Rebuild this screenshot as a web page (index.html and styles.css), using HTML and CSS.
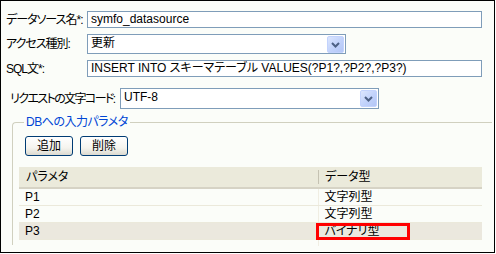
FILE: index.html
```html
<!DOCTYPE html>
<html>
<head>
    <title>データソース設定</title>
    <meta charset="utf-8">
    <link rel="stylesheet" href="styles.css">
</head>
<body>
    <div class="frame">
        <div class="form-row row-first">
            <label class="field-label">データソース名*:</label>
            <div class="text-box wide">symfo_datasource</div>
        </div>
        <div class="form-row row-access">
            <label class="field-label">アクセス種別:</label>
            <div class="select-box access-select">
                <span class="select-value">更新</span>
                <span class="drop-btn">
                    <svg width="9" height="6" viewBox="0 0 9 6"><path d="M1 1 L4.5 4.5 L8 1" fill="none" stroke="#4d6185" stroke-width="2"/></svg>
                </span>
            </div>
        </div>
        <div class="form-row row-sql">
            <label class="field-label">SQL文*:</label>
            <div class="text-box wide">INSERT INTO スキーマテーブル VALUES(?P1?,?P2?,?P3?)</div>
        </div>
        <div class="form-row row-charset">
            <label class="field-label charset-label">リクエストの文字コード:</label>
            <div class="select-box charset-select">
                <span class="select-value">UTF-8</span>
                <span class="drop-btn">
                    <svg width="9" height="6" viewBox="0 0 9 6"><path d="M1 1 L4.5 4.5 L8 1" fill="none" stroke="#4d6185" stroke-width="2"/></svg>
                </span>
            </div>
        </div>
        <fieldset class="param-group">
            <legend>DBへの入力パラメタ</legend>
            <div class="btn-row">
                <button class="xp-btn">追加</button>
                <button class="xp-btn">削除</button>
            </div>
            <table class="param-table">
                <thead>
                    <tr><th class="col-name">パラメタ</th><th class="col-type">データ型</th></tr>
                </thead>
                <tbody>
                    <tr><td>P1</td><td class="type-cell">文字列型</td></tr>
                    <tr><td>P2</td><td class="type-cell">文字列型</td></tr>
                    <tr class="selected"><td>P3</td><td class="type-cell">バイナリ型<span class="highlight"></span></td></tr>
                    <tr class="filler"><td></td><td class="type-cell"></td></tr>
                </tbody>
            </table>
        </fieldset>
    </div>
</body>
</html>
```

FILE: styles.css
```css
html, body {
    margin: 0;
    padding: 0;
    background: #fff;
}
body {
    font-family: "Liberation Sans", "Noto Sans CJK JP", sans-serif;
    font-size: 12px;
    font-feature-settings: "palt";
    color: #000;
}
.frame {
    width: 493px;
    height: 251px;
    border: 1px solid #000;
    background: #fbfdf9;
    overflow: hidden;
}
.form-row {
    display: flex;
    align-items: center;
}
.row-first { margin-top: 10px; }
.row-access { margin-top: 6px; }
.row-sql { margin-top: 6px; }
.row-charset { margin-top: 11px; }
.field-label {
    flex-shrink: 0;
    width: 81px;
    padding-left: 5px;
    line-height: 14px;
    letter-spacing: -1px;
    white-space: nowrap;
}
.charset-label {
    width: 110px;
    padding-left: 9px;
    letter-spacing: -1.6px;
}
.text-box {
    box-sizing: border-box;
    height: 17px;
    border: 1px solid #7f9db9;
    background: #fff;
    padding: 0 3px;
    line-height: 15px;
    white-space: nowrap;
    overflow: hidden;
}
.wide { width: 395px; }
.select-box {
    box-sizing: border-box;
    border: 1px solid #7f9db9;
    background: #fff;
    display: flex;
    justify-content: space-between;
    align-items: flex-start;
    padding: 1px;
}
.access-select { width: 259px; height: 20px; }
.charset-select { width: 259px; height: 21px; }
.select-value {
    padding-left: 2px;
    line-height: 15px;
}
.drop-btn {
    box-sizing: border-box;
    width: 17px;
    height: 17px;
    border: 1px solid #c3d3fd;
    border-radius: 2px;
    background: linear-gradient(135deg, #dce6fe 0%, #c1d2fb 55%, #b3c6f6 100%);
    display: flex;
    align-items: center;
    justify-content: center;
}
.param-group {
    margin: 6px 0 0 11px;
    padding: 0 0 0 6px;
    width: 480px;
    height: 130px;
    box-sizing: border-box;
    border: 1px solid #d0d0bf;
    border-right: none;
    border-bottom: none;
    border-radius: 4px 0 0 0;
}
.param-group legend {
    color: #0046d5;
    padding: 0 2px;
    margin-left: 5px;
    line-height: 14px;
    letter-spacing: -0.5px;
}
.btn-row {
    display: flex;
    gap: 7px;
    margin: 7px 0 0 6px;
}
.xp-btn {
    box-sizing: border-box;
    width: 48px;
    height: 20px;
    border: 1px solid #003c74;
    border-radius: 3px;
    background: linear-gradient(#fff 0%, #f5f4ee 60%, #dcdad0 100%);
    font-family: inherit;
    font-size: 12px;
    font-feature-settings: "palt";
    padding: 0;
    line-height: 16px;
    color: #000;
}
.param-table {
    margin-top: 11px;
    width: 463px;
    border-collapse: collapse;
    table-layout: fixed;
}
.param-table th {
    height: 20px;
    padding: 0 0 0 7px;
    background: #ebeadb;
    border-bottom: 2px solid #d6d3c5;
    font-weight: normal;
    text-align: left;
    line-height: 14px;
}
.col-name { width: 292px; }
.col-type {
    background: linear-gradient(#c5c2b2, #c5c2b2) no-repeat 0 3px / 1px 14px, #ebeadb !important;
}
.param-table td {
    height: 16px;
    padding: 0 0 0 6px;
    border-bottom: 1px solid #ebe9db;
    line-height: 14px;
}
.param-table td.type-cell {
    border-left: 1px solid #f0eee3;
    padding-left: 6px;
    position: relative;
}
.param-table tr.selected td {
    background: #ebe8de;
}
.param-table tr.filler td {
    height: 6px;
    border-bottom: none;
}
.highlight {
    position: absolute;
    left: -3px;
    top: 0;
    width: 94px;
    height: 17px;
    box-sizing: border-box;
    border: 3px solid #ff0000;
}
```
